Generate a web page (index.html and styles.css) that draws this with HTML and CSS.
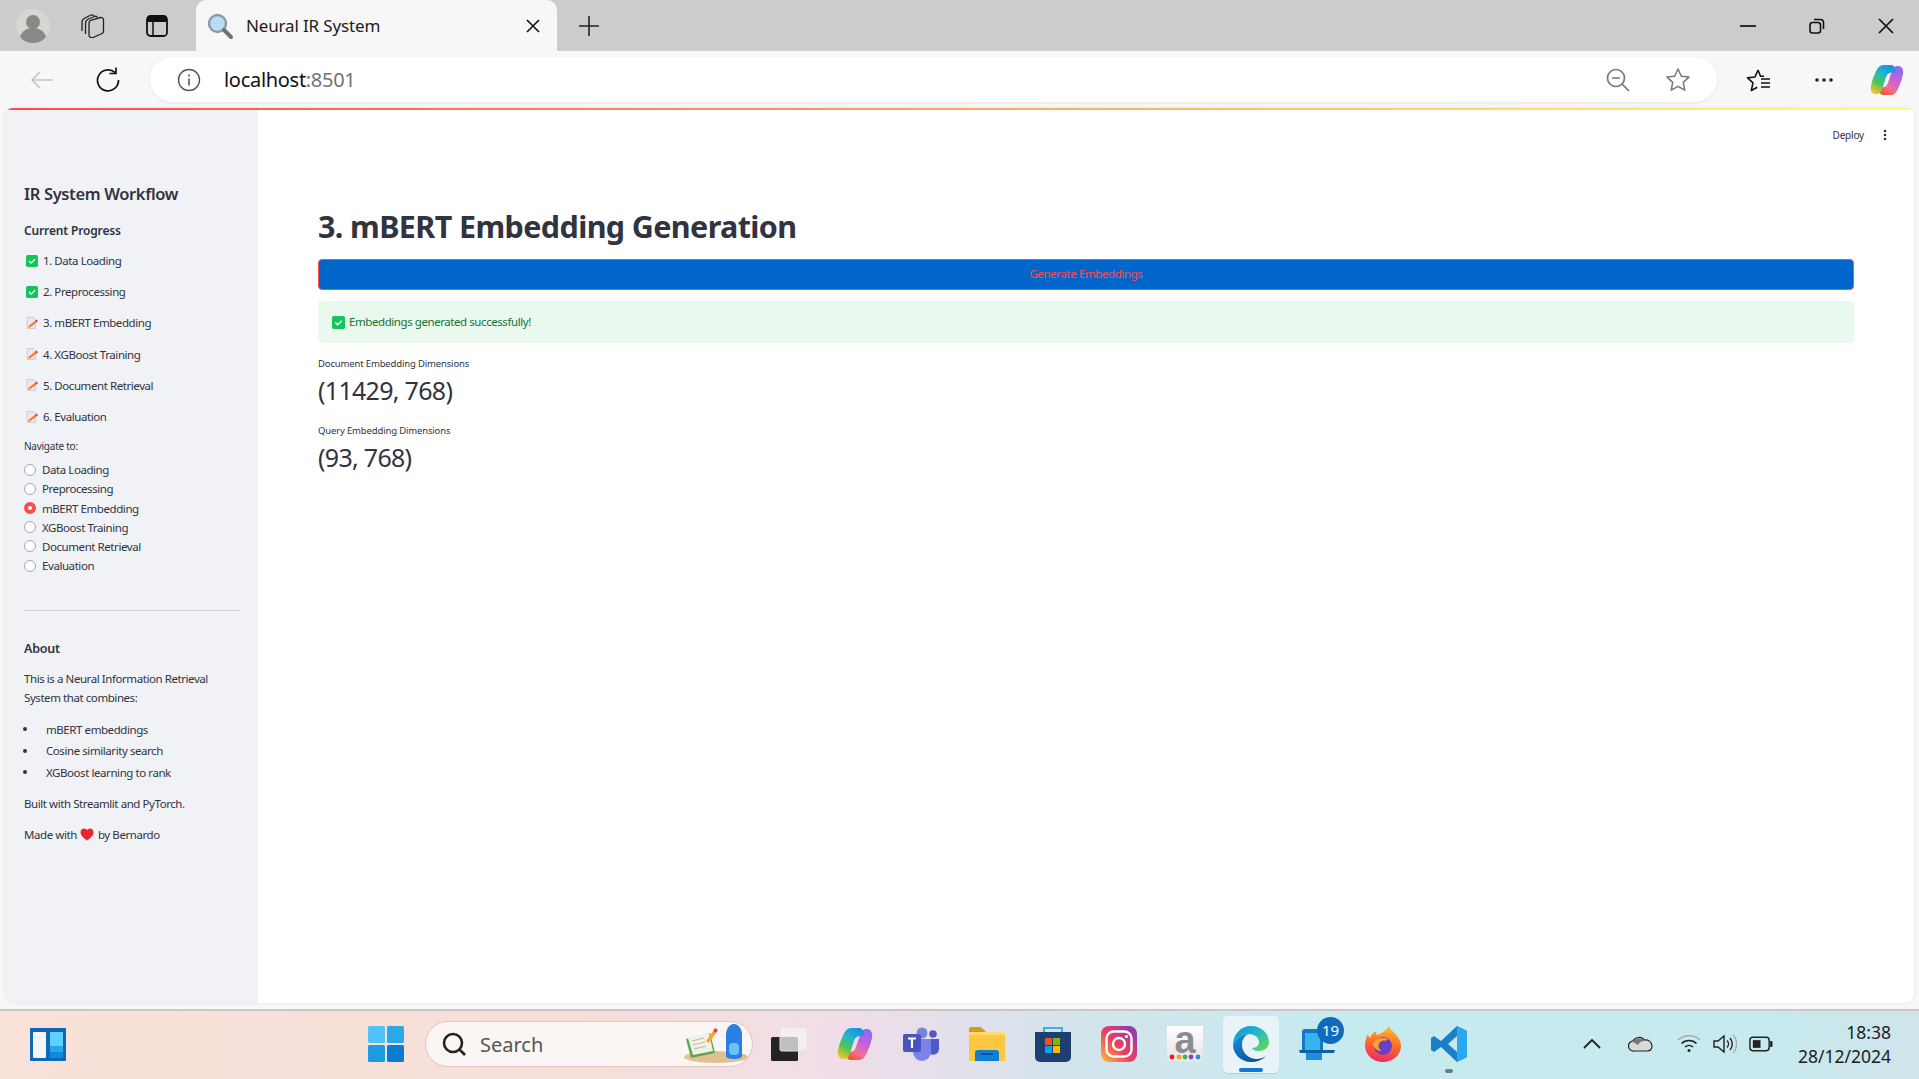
FILE: index.html
```html
<!DOCTYPE html>
<html lang="en">
<head>
    <meta charset="UTF-8">
    <title>Neural IR System</title>
    <link rel="stylesheet" href="styles.css">
</head>
<body>
    <!-- browser tab strip -->
    <div class="tabstrip">
        <div class="strip-left">
            <span class="strip-btn">
                <svg width="36" height="36" viewBox="0 0 36 36"><circle cx="18" cy="18" r="17" fill="#d6d6d2"/><circle cx="18" cy="14" r="7" fill="#8a8884"/><path d="M5 29c2-7 8-9 13-9s11 2 13 9a17 17 0 0 1-26 0z" fill="#8a8884"/></svg>
            </span>
            <span class="strip-btn">
                <svg class="icon-collections" width="24" height="24" viewBox="0 0 24 24" fill="none" stroke="#222" stroke-width="1.300"><path d="M1 17V8c0-2 1-3 3-4l6-3c1-.5 2 0 3 1"/><path d="M4.500 20V9c0-2 1-3 3-4l6-2.500c1-.5 2-.2 3 .8"/><path d="M8 9c0-1.500 1-2.500 2.500-3l9-2.500c1.500-.3 3 .7 3 2.500v11c0 1.500-1 2.500-2.500 3l-8 3.500c-2 .7-4-.5-4-2.500z"/></svg>
            </span>
            <span class="strip-btn">
                <svg class="icon-tabs" width="22" height="22" viewBox="0 0 22 22"><rect x="1" y="1" width="20" height="20" rx="3.500" fill="none" stroke="#111" stroke-width="1.800"/><path d="M1.500 1.500h19v5.500h-19z" fill="#111"/><path d="M7 7v14" stroke="#111" stroke-width="1.500"/></svg>
            </span>
        </div>
        <div class="tab">
            <svg width="28" height="28" viewBox="0 0 28 28"><circle cx="11.500" cy="11.500" r="8.500" fill="#b9dcf5" stroke="#8d9aa6" stroke-width="2.400"/><path d="M18 18l7 7" stroke="#6d7378" stroke-width="4" stroke-linecap="round"/></svg>
            <span class="tab-title">Neural IR System</span>
            <svg class="tab-close" width="14" height="14" viewBox="0 0 14 14"><path d="M1 1l12 12M13 1L1 13" stroke="#111" stroke-width="1.600"/></svg>
        </div>
        <span class="new-tab">
            <svg width="22" height="22" viewBox="0 0 22 22"><path d="M11 1v20M1 11h20" stroke="#222" stroke-width="1.600"/></svg>
        </span>
        <div class="win-controls">
            <svg width="16" height="16" viewBox="0 0 16 16"><path d="M0 8h16" stroke="#111" stroke-width="1.700"/></svg>
            <svg width="16" height="16" viewBox="0 0 16 16" fill="none" stroke="#111" stroke-width="1.600"><rect x="1" y="4.500" width="10.500" height="10.500" rx="2.500"/><path d="M5 1.500h6.500a3 3 0 0 1 3 3V11"/></svg>
            <svg width="16" height="16" viewBox="0 0 16 16"><path d="M1 1l14 14M15 1L1 15" stroke="#111" stroke-width="1.700"/></svg>
        </div>
    </div>

    <!-- address bar -->
    <div class="toolbar">
        <svg class="tool-back" width="24" height="20" viewBox="0 0 24 20" fill="none" stroke="#c4c4c4" stroke-width="1.600"><path d="M23 10H2M10 2l-8 8 8 8"/></svg>
        <svg class="tool-reload" width="26" height="26" viewBox="0 0 26 26" fill="none" stroke="#111" stroke-width="1.700"><path d="M20 5.500a10.500 10.500 0 1 0 3.500 7.500"/><path d="M14.500 5.500H21V-.5" transform="translate(0 1)"/></svg>
        <div class="address">
            <svg width="24" height="24" viewBox="0 0 24 24" fill="none" stroke="#555"><circle cx="12" cy="12" r="10.500" stroke-width="1.400"/><path d="M12 10.500v7" stroke-width="1.600"/><path d="M12 6.500v2" stroke-width="1.600"/></svg>
            <span class="url">localhost<span class="url-port">:8501</span></span>
            <svg class="addr-zoom" width="24" height="24" viewBox="0 0 24 24" fill="none" stroke="#777" stroke-width="1.700"><circle cx="10" cy="10" r="8.500"/><path d="M16 16l7 7M6 10h8"/></svg>
            <svg class="addr-star" width="26" height="26" viewBox="0 0 26 26" fill="none" stroke="#777" stroke-width="1.500"><path d="M13 2l3.300 7.200 7.700.900-5.700 5.300 1.500 7.800L13 19.300l-6.800 3.900 1.500-7.800L2 10.100l7.700-.900z" stroke-linejoin="round"/></svg>
        </div>
        <svg class="tool-fav" width="26" height="26" viewBox="0 0 26 26" fill="none" stroke="#111" stroke-width="1.600"><path d="M13 3l-3 7-7.500.900 5.500 5-1.700 7.600 6-3.300M13 3l2.500 6.200H19" stroke-linejoin="round"/><path d="M16 12h9M16 16h9M16 20h9"/></svg>
        <svg class="tool-more" width="20" height="6" viewBox="0 0 20 6" fill="#222"><circle cx="3" cy="3" r="1.800"/><circle cx="10" cy="3" r="1.800"/><circle cx="17" cy="3" r="1.800"/></svg>
        <svg class="tool-copilot" width="34" height="32" viewBox="0 0 36 34">
            <defs>
                <linearGradient id="cpa" x1=".7" y1="0" x2=".2" y2="1"><stop offset="0" stop-color="#1a8fe6"/><stop offset=".35" stop-color="#22b8c8"/><stop offset=".65" stop-color="#4cc45a"/><stop offset="1" stop-color="#f6c52e"/></linearGradient>
                <linearGradient id="cpb" x1=".8" y1="0" x2=".3" y2="1"><stop offset="0" stop-color="#8a6cf0"/><stop offset=".4" stop-color="#c05fe0"/><stop offset=".75" stop-color="#f46f96"/><stop offset="1" stop-color="#f4562e"/></linearGradient>
            </defs>
            <path d="M22 33H14c-3 0-4-2-5-5l-1-3h4c4 0 6-2 7-5l4-12c1-4 3-6 6-6h1c4 0 6 4 5 9-1 4-2 8-4 12-2 6-5 10-9 10z" fill="url(#cpb)"/>
            <path d="M14 1h8c3 0 4 2 5 5l1 3h-4c-4 0-6 2-7 5l-4 12c-1 4-3 6-6 6H6c-4 0-6-4-5-9 1-4 2-8 4-12C7 5 10 1 14 1z" fill="url(#cpa)"/>
        </svg>
    </div>

    <!-- the streamlit page -->
    <div class="viewport">
        <div class="window">
            <div class="decoration"></div>
            <div class="app">
                <aside class="sidebar">
                    <h2 class="side-title">IR System Workflow</h2>
                    <h3 class="side-head">Current Progress</h3>
                    <ul class="steps">
                        <li><svg class="emoji" viewBox="0 0 14 14"><rect width="14" height="14" rx="2" fill="#12c65b"/><path d="M3.500 7l2.500 2.500 4.500-4.500" fill="none" stroke="#fff" stroke-width="1.500"/></svg>1. Data Loading</li>
                        <li><svg class="emoji" viewBox="0 0 14 14"><rect width="14" height="14" rx="2" fill="#12c65b"/><path d="M3.500 7l2.500 2.500 4.500-4.500" fill="none" stroke="#fff" stroke-width="1.500"/></svg>2. Preprocessing</li>
                        <li><svg class="emoji" viewBox="0 0 14 14"><path d="M1.500 .5h7l2.500 2.500v10.500H1.500z" fill="#ece7f1" stroke="#b8aec6" stroke-width=".7"/><path d="M3.500 10l7-5.500 1.500 2-7 5.500-2.500.5z" fill="#f57c1f"/><path d="M10.500 4.500l2-1.500 1.500 2-2 1.500z" fill="#e8384a"/></svg>3. mBERT Embedding</li>
                        <li><svg class="emoji" viewBox="0 0 14 14"><path d="M1.500 .5h7l2.500 2.500v10.500H1.500z" fill="#ece7f1" stroke="#b8aec6" stroke-width=".7"/><path d="M3.500 10l7-5.500 1.500 2-7 5.500-2.500.5z" fill="#f57c1f"/><path d="M10.500 4.500l2-1.500 1.500 2-2 1.500z" fill="#e8384a"/></svg>4. XGBoost Training</li>
                        <li><svg class="emoji" viewBox="0 0 14 14"><path d="M1.500 .5h7l2.500 2.500v10.500H1.500z" fill="#ece7f1" stroke="#b8aec6" stroke-width=".7"/><path d="M3.500 10l7-5.500 1.500 2-7 5.500-2.500.5z" fill="#f57c1f"/><path d="M10.500 4.500l2-1.500 1.500 2-2 1.500z" fill="#e8384a"/></svg>5. Document Retrieval</li>
                        <li><svg class="emoji" viewBox="0 0 14 14"><path d="M1.500 .5h7l2.500 2.500v10.500H1.500z" fill="#ece7f1" stroke="#b8aec6" stroke-width=".7"/><path d="M3.500 10l7-5.500 1.500 2-7 5.500-2.500.5z" fill="#f57c1f"/><path d="M10.500 4.500l2-1.500 1.500 2-2 1.500z" fill="#e8384a"/></svg>6. Evaluation</li>
                    </ul>
                    <div class="nav-label">Navigate to:</div>
                    <ul class="radios">
                        <li><span class="radio"></span>Data Loading</li>
                        <li><span class="radio"></span>Preprocessing</li>
                        <li><span class="radio radio-on"></span>mBERT Embedding</li>
                        <li><span class="radio"></span>XGBoost Training</li>
                        <li><span class="radio"></span>Document Retrieval</li>
                        <li><span class="radio"></span>Evaluation</li>
                    </ul>
                    <hr class="side-rule">
                    <h3 class="about-head">About</h3>
                    <p class="about-text">This is a Neural Information Retrieval System that combines:</p>
                    <ul class="about-list">
                        <li>mBERT embeddings</li>
                        <li>Cosine similarity search</li>
                        <li>XGBoost learning to rank</li>
                    </ul>
                    <p class="about-line">Built with Streamlit and PyTorch.</p>
                    <p class="about-line">Made with <svg class="heart" viewBox="0 0 14 13"><path d="M7 12.500C3 9.500.5 7.300.5 4.200.5 2 2.200.5 4 .5c1.300 0 2.400.7 3 1.800C7.600 1.200 8.700.5 10 .5c1.800 0 3.500 1.500 3.500 3.700 0 3.100-2.500 5.300-6.500 8.300z" fill="#e8262c"/></svg> by Bernardo</p>
                </aside>
                <main class="main">
                    <div class="main-top">
                        <span class="deploy">Deploy</span>
                        <svg width="4" height="12" viewBox="0 0 4 12" fill="#31333f"><circle cx="2" cy="2" r="1.300"/><circle cx="2" cy="6" r="1.300"/><circle cx="2" cy="10" r="1.300"/></svg>
                    </div>
                    <h1 class="page-title">3. mBERT Embedding Generation</h1>
                    <button class="gen-btn">Generate Embeddings</button>
                    <div class="alert"><svg class="emoji" viewBox="0 0 14 14"><rect width="14" height="14" rx="2" fill="#12c65b"/><path d="M3.500 7l2.500 2.500 4.500-4.500" fill="none" stroke="#fff" stroke-width="1.500"/></svg>Embeddings generated successfully!</div>
                    <div class="metric">
                        <div class="metric-label">Document Embedding Dimensions</div>
                        <div class="metric-value">(11429, 768)</div>
                    </div>
                    <div class="metric">
                        <div class="metric-label">Query Embedding Dimensions</div>
                        <div class="metric-value">(93, 768)</div>
                    </div>
                </main>
            </div>
        </div>
    </div>

    <!-- windows taskbar -->
    <div class="taskbar">
        <svg class="widgets" width="36" height="33" viewBox="0 0 36 33"><rect width="36" height="33" rx="1" fill="#0f67b5"/><rect x="3" y="4" width="13" height="26" rx="1" fill="#f2f4f6"/><rect x="20" y="4" width="13" height="14" fill="#5cd2fb"/><rect x="20" y="18" width="13" height="6" fill="#27a6ee"/><rect x="20" y="24" width="13" height="6" fill="#0f88e0"/></svg>
        <div class="task-center">
            <svg class="start" width="36" height="36" viewBox="0 0 36 36"><rect width="17" height="17" rx="1.500" fill="#4fc3f7"/><rect x="19" width="17" height="17" rx="1.500" fill="#29a9ea"/><rect y="19" width="17" height="17" rx="1.500" fill="#1a9be2"/><rect x="19" y="19" width="17" height="17" rx="1.500" fill="#0a7cd1"/></svg>
            <div class="search">
                <svg width="26" height="26" viewBox="0 0 26 26" fill="none" stroke="#222" stroke-width="2.600"><circle cx="12" cy="12" r="9"/><path d="M18 18l6 6"/></svg>
                <span class="search-text">Search</span>
                <svg class="search-art" width="70" height="42" viewBox="0 0 70 42">
                    <ellipse cx="38" cy="34" rx="32" ry="6" fill="#e3c08f"/>
                    <path d="M8 16l24-6 5 20-24 5z" fill="#5aa84e"/>
                    <path d="M10 15l21-5 4 18-20 4z" fill="#f2f1e8"/>
                    <path d="M14 18l12-3M15 22l12-3M16 26l12-3" stroke="#b9b8ae"/>
                    <path d="M28 18l7-10 3 2-7 10z" fill="#f5a623"/>
                    <path d="M35 8l2-3 3 2-2 3z" fill="#e8384a"/>
                    <path d="M48 12c0-7 4-11 8-11s8 4 8 11v21c0 2-3 3-8 3s-8-1-8-3z" fill="#2a7fe0"/>
                    <rect x="51" y="20" width="10" height="12" rx="4" fill="#6cc1f7"/>
                </svg>
            </div>
            <span class="task-slot">
                <svg width="36" height="34" viewBox="0 0 36 34"><rect y="10" width="27" height="24" rx="1.500" fill="#242424"/><rect x="9" y="0" width="27" height="24" rx="1.500" fill="#f4f3f3" fill-opacity=".75" stroke="#e2e0df"/></svg>
            </span>
            <span class="task-slot">
                <svg width="36" height="34" viewBox="0 0 36 34">
                    <defs>
                        <linearGradient id="cpc" x1=".7" y1="0" x2=".2" y2="1"><stop offset="0" stop-color="#1a8fe6"/><stop offset=".35" stop-color="#22b8c8"/><stop offset=".65" stop-color="#4cc45a"/><stop offset="1" stop-color="#f6c52e"/></linearGradient>
                        <linearGradient id="cpd" x1=".8" y1="0" x2=".3" y2="1"><stop offset="0" stop-color="#8a6cf0"/><stop offset=".4" stop-color="#c05fe0"/><stop offset=".75" stop-color="#f46f96"/><stop offset="1" stop-color="#f4562e"/></linearGradient>
                    </defs>
                    <path d="M22 33H14c-3 0-4-2-5-5l-1-3h4c4 0 6-2 7-5l4-12c1-4 3-6 6-6h1c4 0 6 4 5 9-1 4-2 8-4 12-2 6-5 10-9 10z" fill="url(#cpd)"/>
                    <path d="M14 1h8c3 0 4 2 5 5l1 3h-4c-4 0-6 2-7 5l-4 12c-1 4-3 6-6 6H6c-4 0-6-4-5-9 1-4 2-8 4-12C7 5 10 1 14 1z" fill="url(#cpc)"/>
                </svg>
            </span>
            <span class="task-slot">
                <svg width="36" height="34" viewBox="0 0 36 34"><circle cx="19" cy="6" r="5.500" fill="#7b83d6"/><circle cx="30" cy="7" r="3.800" fill="#5059c9"/><path d="M24 12h12v10a6 6 0 0 1-9 5z" fill="#5059c9"/><path d="M10 12h18v13a9 9 0 0 1-18 0z" fill="#7b83eb"/><rect y="7" width="18" height="18" rx="2" fill="#4b53bc"/><path d="M5 11.500h8M9 11.500v9.500" stroke="#fff" stroke-width="2.200"/></svg>
            </span>
            <span class="task-slot">
                <svg width="36" height="34" viewBox="0 0 36 34"><path d="M0 2c0-1 1-2 2-2h9c1 0 2 1 3 2l3 3H0z" fill="#d99a1c"/><path d="M0 5h36v29H0z" fill="#fdc73f"/><path d="M0 5h36v3H0z" fill="#fddc72"/><path d="M6 34V26c0-2 1-3 3-3h18c2 0 3 1 3 3v8z" fill="#0f7fd6"/><path d="M12 27h12" stroke="#0a4f94" stroke-width="1.800"/></svg>
            </span>
            <span class="task-slot">
                <svg width="36" height="36" viewBox="0 0 36 36"><path d="M9 7V2h18v5" fill="none" stroke="#36b2ee" stroke-width="2"/><path d="M0 6h36v25a5 5 0 0 1-5 5H5a5 5 0 0 1-5-5z" fill="#1d3f72"/><rect x="10" y="12" width="7" height="7" fill="#f25022"/><rect x="18" y="12" width="7" height="7" fill="#7fba00"/><rect x="10" y="20" width="7" height="7" fill="#00a4ef"/><rect x="18" y="20" width="7" height="7" fill="#ffb900"/></svg>
            </span>
            <span class="task-slot">
                <svg width="36" height="36" viewBox="0 0 36 36">
                    <defs><linearGradient id="igr" x1="0" y1="1" x2="1" y2="0"><stop offset="0" stop-color="#fdc23a"/><stop offset=".45" stop-color="#ee3f5d"/><stop offset="1" stop-color="#7a3bc4"/></linearGradient></defs>
                    <rect width="36" height="36" rx="8" fill="url(#igr)"/><rect x="5.500" y="5.500" width="25" height="25" rx="7" fill="none" stroke="#fff" stroke-width="2.400"/><circle cx="18" cy="18" r="6" fill="none" stroke="#fff" stroke-width="2.400"/><circle cx="25.500" cy="10.500" r="1.600" fill="#fff"/>
                </svg>
            </span>
            <span class="task-slot">
                <div class="amazon">
                    <span class="amazon-a">a</span>
                    <svg width="32" height="6" viewBox="0 0 32 6"><circle cx="3" cy="3" r="2.400" fill="#e8182c"/><circle cx="10" cy="3" r="2.400" fill="#f2a51e"/><circle cx="16" cy="3" r="2.400" fill="#48b04a"/><circle cx="22" cy="3" r="2.400" fill="#8a3fd0"/><circle cx="29" cy="3" r="2.400" fill="#2c8ad6"/></svg>
                </div>
            </span>
            <span class="task-slot task-active">
                <svg width="36" height="36" viewBox="0 0 36 36">
                    <defs>
                        <linearGradient id="edgeb" x1="0" y1="0" x2="1" y2=".8"><stop offset="0" stop-color="#0f8fdc"/><stop offset=".5" stop-color="#22b6c8"/><stop offset="1" stop-color="#5ad85e"/></linearGradient>
                        <linearGradient id="edged" x1="0" y1="0" x2=".8" y2="1"><stop offset="0" stop-color="#1b8fe0"/><stop offset="1" stop-color="#0b4a94"/></linearGradient>
                    </defs>
                    <path d="M18 0c11 0 18 8 18 16 0 6-5 9-10 9-4 0-6-1-7-3 5 0 7-3 7-6 0-4-4-8-10-8C9 8 3 12 0 19 0 8 8 0 18 0z" fill="url(#edgeb)"/>
                    <path d="M0 19C3 12 9 8 16 8c-5 2-7 6-7 11 0 8 7 14 15 14 3 0 6-1 9-3-4 4-9 6-15 6C8 36 0 28 0 19z" fill="url(#edged)"/>
                </svg>
                <span class="active-bar"></span>
            </span>
            <span class="task-slot">
                <div class="phone-badge">
                    <svg width="36" height="36" viewBox="0 0 36 36"><path d="M3 6c0-2 1-3 3-3h15c2 0 3 1 3 3v21H3z" fill="#1776c8"/><path d="M6 7h15v18H6z" fill="#35b5ee"/><path d="M0 24h36l-1 3H1z" fill="#0f5fa8"/><path d="M7 27h16v7H7z" fill="#1b8fdc"/></svg>
                    <span class="badge">19</span>
                </div>
            </span>
            <span class="task-slot">
                <svg width="36" height="36" viewBox="0 0 36 36">
                    <defs>
                        <linearGradient id="ffx" x1=".6" y1="0" x2=".4" y2="1"><stop offset="0" stop-color="#ffc02e"/><stop offset=".5" stop-color="#ff6a2a"/><stop offset="1" stop-color="#ee2a62"/></linearGradient>
                    </defs>
                    <path d="M24 0c1 5 12 9 12 20 0 9-8 16-18 16S0 29 0 19c0-5 2-9 3-11 0 2 1 3 2 4 1-4 4-6 7-7-1 2-1 3 0 4 3-1 8-3 12-9z" fill="url(#ffx)"/>
                    <circle cx="18" cy="20" r="9" fill="#6b3fc6"/>
                    <path d="M8 17c3-5 10-6 15-4-2 2-4 3-7 3 1 3 4 4 7 3-1 4-4 6-8 6-4-1-7-4-7-8z" fill="#ff9f2e"/>
                    <circle cx="19" cy="20" r="5.500" fill="#6b3fc6"/>
                </svg>
            </span>
            <span class="task-slot">
                <svg width="36" height="36" viewBox="0 0 36 36"><path d="M26 0l10 5v26l-10 5-16-15-7 5-3-2V12l3-2 7 5zM26 10l-9 8 9 8z" fill="#1a7fc9"/><path d="M26 0l10 5v26l-10 5z" fill="#2ba7f0"/></svg>
                <span class="running-dot"></span>
            </span>
        </div>
        <div class="tray">
            <svg width="18" height="10" viewBox="0 0 18 10" fill="none" stroke="#222" stroke-width="1.800"><path d="M1 9l8-8 8 8"/></svg>
            <svg class="tray-cloud" width="25" height="16" viewBox="0 0 25 16"><path d="M6 15a5 5 0 0 1-1-10c2-4 9-5 11-1 4-1 8 2 8 6 0 3-2 5-5 5z" fill="#d9d9d9" stroke="#222" stroke-width="1.200"/><path d="M5 6c2-4 9-5 11-1-3 0-5 2-6 4-2-1-3-2-5-3z" fill="#777"/></svg>
            <svg class="tray-wifi" width="24" height="18" viewBox="0 0 24 18" fill="none" stroke="#222" stroke-width="1.600"><path d="M1 5a16 16 0 0 1 22 0" stroke="#aaa"/><path d="M4.500 8.500a11 11 0 0 1 15 0"/><path d="M8 12a6 6 0 0 1 8 0"/><circle cx="12" cy="15.500" r="1.500" fill="#222" stroke="none"/></svg>
            <svg width="24" height="20" viewBox="0 0 24 20" fill="none" stroke="#222" stroke-width="1.400"><path d="M1 7v6h4l6 5V2L5 7z"/><path d="M14 6.500a5 5 0 0 1 0 7M17 4a9 9 0 0 1 0 12"/><path d="M20 1a13 13 0 0 1 0 18" stroke="#aaa"/></svg>
            <svg width="24" height="16" viewBox="0 0 25 16"><rect x="1" y="1" width="20" height="14" rx="3" fill="none" stroke="#222" stroke-width="1.500"/><rect x="4" y="4" width="8" height="8" fill="#222"/><path d="M22 5h1.500a1 1 0 0 1 1 1v4a1 1 0 0 1-1 1H22z" fill="#222"/></svg>
            <div class="clock">
                <div>18:38</div>
                <div>28/12/2024</div>
            </div>
        </div>
    </div>
</body>
</html>
```

FILE: styles.css
```css
* {
    box-sizing: border-box;
}

html, body {
    margin: 0;
    height: 100%;
    overflow: hidden;
}

body {
    display: flex;
    flex-direction: column;
    font-family: "Noto Sans", Arial, sans-serif;
    color: #31333f;
    background: #f7f7f7;
}

h1, h2, h3, p, ul {
    margin: 0;
    padding: 0;
}

ul {
    list-style: none;
}

/* tab strip */
.tabstrip {
    height: 51px;
    flex: none;
    display: flex;
    align-items: flex-end;
    background: #cccccc;
}

.strip-left {
    width: 196px;
    height: 51px;
    display: flex;
    align-items: center;
    padding-left: 15px;
}

.strip-btn {
    width: 64px;
    display: flex;
    justify-content: flex-start;
}

.strip-btn:last-child {
    width: 50px;
}

.icon-collections {
    margin-left: 2px;
}

.icon-tabs {
    margin-left: 3px;
}

.tab {
    width: 361px;
    height: 51px;
    display: flex;
    align-items: center;
    gap: 12px;
    padding: 0 17px 0 10px;
    background: #f7f7f7;
    border-radius: 10px 10px 0 0;
}

.tab-title {
    font-size: 17px;
    letter-spacing: -0.15px;
    color: #1c1c1c;
    flex: 1;
}

.new-tab {
    width: 64px;
    height: 51px;
    display: flex;
    align-items: center;
    justify-content: center;
}

.win-controls {
    margin-left: auto;
    height: 51px;
    display: flex;
    align-items: center;
    gap: 53px;
    padding-right: 25px;
}

/* address bar */
.toolbar {
    height: 57px;
    flex: none;
    display: flex;
    align-items: center;
    padding-left: 30px;
    background: #f7f7f7;
}

.tool-back {
    margin-right: 41px;
}

.tool-reload {
    margin-right: 29px;
}

.address {
    width: 1567px;
    height: 45px;
    display: flex;
    align-items: center;
    padding: 0 26px 0 27px;
    background: #fff;
    border-radius: 23px;
    box-shadow: 0 1px 3px rgba(0, 0, 0, 0.08);
}

.url {
    font-size: 20px;
    margin-left: 23px;
    letter-spacing: -0.3px;
    color: #111;
    flex: 1;
}

.url-port {
    color: #6f7378;
}

.addr-zoom {
    margin-right: 35px;
}

.tool-fav {
    margin-left: 28px;
}

.tool-more {
    margin-left: 43px;
}

.tool-copilot {
    margin-left: 36px;
}

/* page area */
.viewport {
    flex: 1;
    min-height: 0;
    padding: 0 5px 6px 5px;
    background: #f7f7f7;
}

.window {
    height: 100%;
    display: flex;
    flex-direction: column;
    overflow: hidden;
    background: #fff;
    border-radius: 8px;
    box-shadow: 0 0 2px rgba(0, 0, 0, 0.15);
}

.decoration {
    height: 2px;
    flex: none;
    background: linear-gradient(90deg, #ff4b4b, #fffd80);
}

.app {
    flex: 1;
    min-height: 0;
    display: flex;
}

/* sidebar */
.sidebar {
    width: 253px;
    flex: none;
    padding: 72px 18px 0 19px;
    background: #f0f2f6;
    font-size: 11.500px;
    letter-spacing: -0.43px;
}

.side-title {
    font-size: 16.500px;
    font-weight: 600;
    line-height: 24px;
    letter-spacing: -0.36px;
}

.side-head {
    font-size: 12px;
    font-weight: 600;
    line-height: 18px;
    margin-top: 16px;
    letter-spacing: -0.15px;
}

.steps {
    margin-top: 5px;
}

.steps li {
    height: 31.200px;
    display: flex;
    align-items: center;
}

.emoji {
    width: 12px;
    height: 12px;
    margin: 0 5px 0 2px;
    flex: none;
}

.nav-label {
    font-size: 10px;
    line-height: 14px;
    letter-spacing: -0.25px;
    margin-top: 7px;
}

.radios {
    margin-top: 7px;
}

.radios li {
    height: 19.200px;
    display: flex;
    align-items: center;
    gap: 6px;
}

.radio {
    width: 12px;
    height: 12px;
    border-radius: 50%;
    background: #fff;
    border: 1px solid #a3a8b4;
}

.radio-on {
    border: 4px solid #ff4b4b;
}

.side-rule {
    margin: 35px 0 0;
    border: 0;
    border-top: 1px solid #cfd1d6;
}

.about-head {
    font-size: 12.500px;
    font-weight: 600;
    line-height: 18px;
    margin-top: 29px;
    letter-spacing: -0.2px;
}

.about-text {
    line-height: 19px;
    margin-top: 11px;
}

.about-list {
    margin-top: 11px;
    margin-bottom: -1px;
}

.about-list li {
    height: 21.500px;
    display: flex;
    align-items: center;
}

.about-list li::before {
    content: "";
    width: 4px;
    height: 4px;
    margin: 0 19px 0 -1px;
    border-radius: 50%;
    background: #31333f;
}

.about-line {
    line-height: 19px;
    margin-top: 12px;
}

.heart {
    width: 14px;
    height: 13px;
    margin: 0 1px;
    vertical-align: -2px;
}

/* main column */
.main {
    flex: 1;
    min-width: 0;
    padding: 0 60px;
}

.main-top {
    height: 50px;
    margin-right: -33px;
    display: flex;
    align-items: center;
    justify-content: flex-end;
    gap: 19px;
}

.deploy {
    font-size: 10px;
    letter-spacing: -0.2px;
}

.page-title {
    font-size: 30.500px;
    font-weight: 700;
    line-height: 46px;
    margin-top: 43px;
    letter-spacing: -0.62px;
}

.gen-btn {
    display: block;
    width: 100%;
    height: 31px;
    margin-top: 10px;
    padding: 0 0 2px;
    font-family: inherit;
    font-size: 11.500px;
    letter-spacing: -0.4px;
    color: #ff4b4b;
    background: #0066cc;
    border: 1px solid #ff4b4b;
    border-radius: 4px;
}

.alert {
    height: 42px;
    margin-top: 11px;
    padding: 0 0 2px 12px;
    display: flex;
    align-items: center;
    font-size: 11.500px;
    letter-spacing: -0.43px;
    color: #177233;
    background: #e9f9ee;
    border-radius: 4px;
}

.alert .emoji {
    width: 13px;
    height: 13px;
    margin: 2px 4px 0 2px;
}

.metric {
    margin-top: 14px;
}

.metric + .metric {
    margin-top: 17px;
}

.metric-label {
    font-size: 9.500px;
    line-height: 14px;
    letter-spacing: -0.15px;
}

.metric-value {
    font-size: 25px;
    line-height: 34px;
    letter-spacing: -0.7px;
    margin-top: 2px;
}

/* taskbar */
.taskbar {
    height: 70px;
    flex: none;
    display: flex;
    align-items: center;
    padding: 0 0 2px 30px;
    border-top: 2px solid #c9c6c4;
    background: linear-gradient(90deg, #f8e2da 0%, #f6dfd8 30%, #f0dde8 44%, #d3e4ec 56%, #c6ebef 70%, #c6eaee 92%, #cfe4ea 100%);
}

.task-center {
    display: flex;
    align-items: center;
    margin-left: 302px;
}

.search {
    width: 328px;
    height: 46px;
    margin-left: 21px;
    margin-right: 3px;
    display: flex;
    align-items: center;
    padding-left: 15px;
    border-radius: 23px;
    background: #fbf5f3;
    border: 1.500px solid #dcc7c3;
}

.search-text {
    font-size: 20px;
    margin-left: 13px;
    color: #555;
    flex: 1;
}

.search-art {
    margin-right: 4px;
}

.task-slot {
    position: relative;
    width: 66px;
    height: 57px;
    display: flex;
    align-items: center;
    justify-content: center;
}

.task-active {
    width: 56px;
    margin: 0 5px;
    background: #e9f4f8;
    border-radius: 5px;
    box-shadow: 0 1px 1px rgba(0, 0, 0, 0.1);
}

.active-bar {
    position: absolute;
    left: 16px;
    right: 16px;
    bottom: 1px;
    height: 4px;
    border-radius: 2px;
    background: #0f78d4;
}

.running-dot {
    position: absolute;
    left: 29px;
    bottom: 0;
    width: 8px;
    height: 4px;
    border-radius: 2px;
    background: #6f7c80;
}

.amazon {
    width: 36px;
    height: 36px;
    display: flex;
    flex-direction: column;
    align-items: center;
    background: linear-gradient(180deg, #fff, #e4e4e4);
}

.amazon-a {
    font-family: "Liberation Sans", Arial, sans-serif;
    font-size: 38px;
    line-height: 28px;
    color: #8c8c8c;
    font-weight: 700;
}

.phone-badge {
    position: relative;
    width: 36px;
    height: 36px;
}

.badge {
    position: absolute;
    top: -9px;
    right: -9px;
    width: 27px;
    height: 27px;
    border-radius: 50%;
    background: #0f6cbd;
    color: #fff;
    font-size: 15px;
    line-height: 27px;
    text-align: center;
}

.tray {
    margin-left: auto;
    display: flex;
    align-items: center;
    gap: 12px;
    padding-right: 28px;
    color: #1c1c1c;
}

.tray-cloud {
    margin-left: 15px;
}

.tray-wifi {
    margin-left: 12px;
}

.clock {
    font-size: 17.500px;
    line-height: 24px;
    text-align: right;
    margin-left: 13px;
}
```
